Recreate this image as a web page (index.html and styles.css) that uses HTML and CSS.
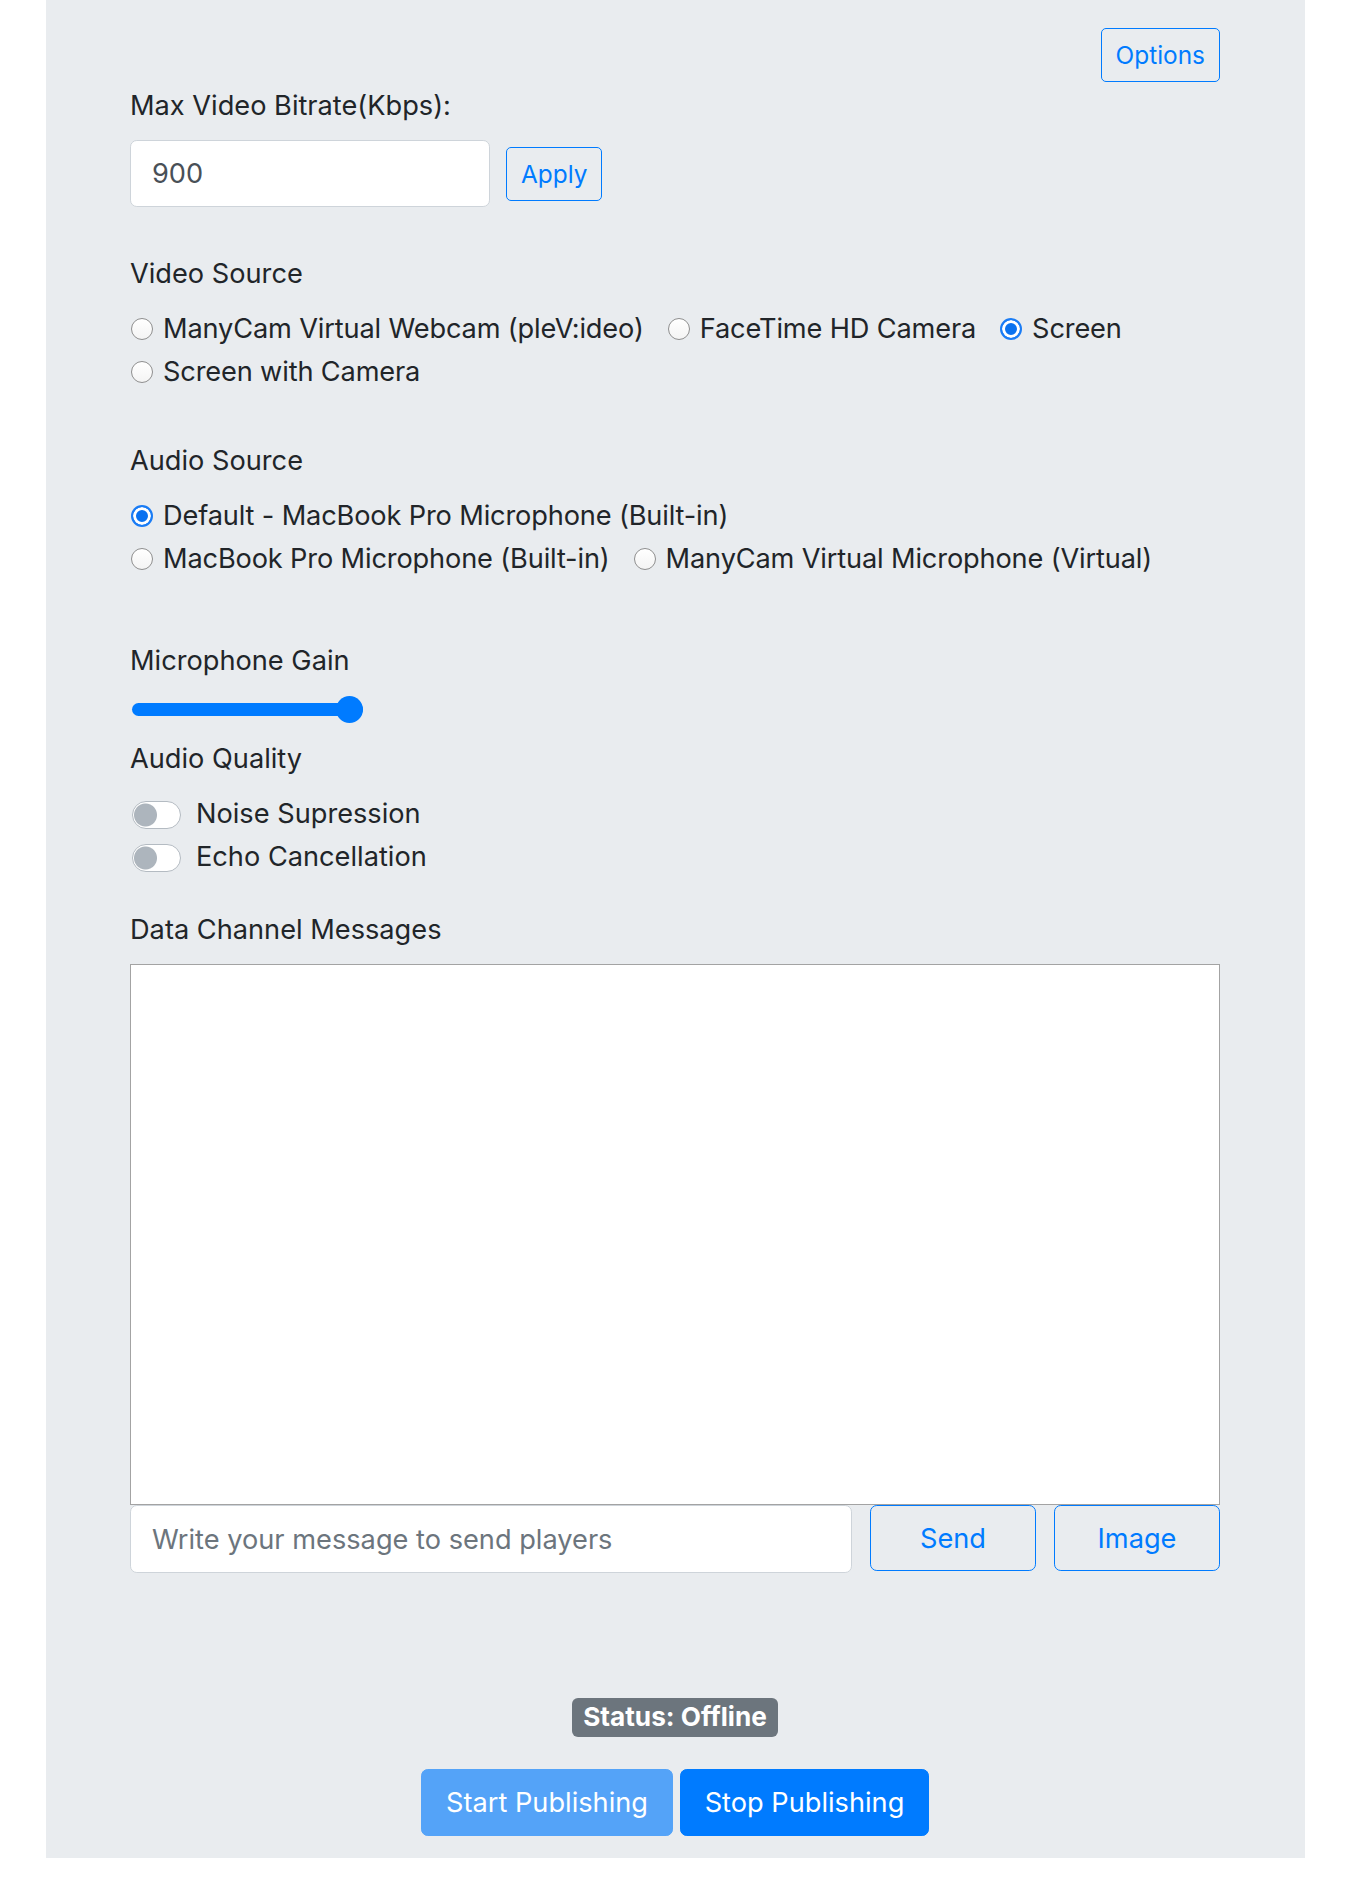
FILE: index.html
```html
<!DOCTYPE html>
<html lang="en">
<head>
<meta charset="utf-8">
<title>Publish</title>
<link rel="stylesheet" href="styles.css">
</head>
<body>
<div class="panel">
  <div class="top-row">
    <button class="btn btn-outline btn-sm">Options</button>
  </div>

  <label class="label label-first" for="bitrate">Max Video Bitrate(Kbps):</label>
  <div class="bitrate-row">
    <input id="bitrate" class="form-control bitrate" type="text" value="900">
    <button class="btn btn-outline btn-sm">Apply</button>
  </div>

  <div class="label section">Video Source</div>
  <div class="choices">
    <div class="choice-row">
      <label class="check"><input type="radio" name="video" class="radio">ManyCam Virtual Webcam (pleV:ideo)</label>
      <label class="check"><input type="radio" name="video" class="radio">FaceTime HD Camera</label>
      <label class="check"><input type="radio" name="video" class="radio" checked>Screen</label>
    </div>
    <div class="choice-row">
      <label class="check"><input type="radio" name="video" class="radio">Screen with Camera</label>
    </div>
  </div>

  <div class="label section">Audio Source</div>
  <div class="choices">
    <div class="choice-row">
      <label class="check"><input type="radio" name="audio" class="radio" checked>Default - MacBook Pro Microphone (Built-in)</label>
    </div>
    <div class="choice-row">
      <label class="check"><input type="radio" name="audio" class="radio">MacBook Pro Microphone (Built-in)</label>
      <label class="check"><input type="radio" name="audio" class="radio">ManyCam Virtual Microphone (Virtual)</label>
    </div>
  </div>

  <div class="label section-gain">Microphone Gain</div>
  <div class="slider-row">
    <input type="range" class="gain" min="0" max="100" value="100">
  </div>

  <div class="label section-quality">Audio Quality</div>
  <div class="switches">
    <label class="switch-row"><input type="checkbox" class="switch">Noise Supression</label>
    <label class="switch-row"><input type="checkbox" class="switch">Echo Cancellation</label>
  </div>

  <div class="label section-data">Data Channel Messages</div>
  <textarea class="messages" readonly></textarea>
  <div class="message-row">
    <input class="form-control message" type="text" placeholder="Write your message to send players">
    <button class="btn btn-outline btn-msg">Send</button>
    <button class="btn btn-outline btn-msg">Image</button>
  </div>

  <div class="status-row">
    <span class="badge">Status: Offline</span>
  </div>
  <div class="publish-row">
    <button class="btn btn-primary btn-start" disabled>Start Publishing</button>
    <button class="btn btn-primary btn-stop">Stop Publishing</button>
  </div>
</div>
</body>
</html>
```

FILE: styles.css
```css
* {
  box-sizing: border-box;
}

html, body {
  margin: 0;
  padding: 0;
  background: #ffffff;
}

body {
  font-family: Inter, "Liberation Sans", Arial, sans-serif;
  font-size: 27.2px;
  line-height: 40.8px;
  color: #212529;
}

.panel {
  margin-left: 46px;
  width: 1259px;
  background: #e9ecef;
  padding: 28px 85px 22px 84px;
  display: flex;
  flex-direction: column;
}

.top-row {
  display: flex;
  justify-content: flex-end;
  height: 54px;
}

.label {
  display: block;
  height: 41px;
  line-height: 41px;
  font-size: 27.2px;
}

.label-first {
  margin-top: 3px;
  margin-bottom: 14px;
}

.btn {
  font-family: inherit;
  display: inline-flex;
  align-items: center;
  justify-content: center;
  border: 1.7px solid transparent;
  border-radius: 6.8px;
  background: transparent;
  cursor: pointer;
  white-space: nowrap;
}

.btn-outline {
  color: #007bff;
  border-color: #007bff;
}

.btn-sm {
  height: 54px;
  font-size: 24.4px;
  padding: 0 14px;
  border-radius: 5px;
}

.bitrate-row {
  display: flex;
  align-items: center;
  gap: 16px;
  height: 67px;
}

.form-control {
  font-family: inherit;
  font-size: 27.2px;
  color: #495057;
  background: #fff;
  border: 1.7px solid #ced4da;
  border-radius: 6.8px;
  padding: 0 21px;
  outline: none;
}

.form-control::placeholder {
  color: #6c757d;
}

.bitrate {
  width: 360px;
  height: 67px;
}

.section {
  margin-top: 46px;
}

.choices {
  margin-top: 14px;
  display: flex;
  flex-direction: column;
}

.choice-row {
  display: flex;
  height: 43px;
  align-items: center;
  gap: 23px;
}

.check {
  display: inline-flex;
  align-items: center;
  gap: 10px;
  white-space: nowrap;
  letter-spacing: -0.15px;
}

.radio {
  appearance: none;
  -webkit-appearance: none;
  margin: 0 0 0 1px;
  width: 22px;
  height: 22px;
  border-radius: 50%;
  border: 1px solid #8f8f8f;
  background: linear-gradient(#ffffff, #f4f4f4);
  flex: none;
}

.radio:checked {
  border: 2px solid #1a7cf5;
  background: #0a72f0;
  box-shadow: inset 0 0 0 3px #ffffff;
}

.section-gain {
  margin-top: 59px;
}

.slider-row {
  margin-top: 14px;
  height: 28px;
  display: flex;
  align-items: center;
}

.gain {
  appearance: none;
  -webkit-appearance: none;
  margin: 0 0 0 2px;
  width: 231px;
  height: 28px;
  background: transparent;
}

.gain::-webkit-slider-runnable-track {
  height: 13px;
  border-radius: 7px;
  background: #007bff;
}

.gain::-webkit-slider-thumb {
  -webkit-appearance: none;
  appearance: none;
  width: 27px;
  height: 27px;
  border-radius: 50%;
  background: #007bff;
  border: none;
  margin-top: -7px;
}

.section-quality {
  margin-top: 15px;
}

.switches {
  margin-top: 14px;
  display: flex;
  flex-direction: column;
}

.switch-row {
  display: flex;
  align-items: center;
  height: 43px;
  gap: 15px;
}

.switch {
  appearance: none;
  -webkit-appearance: none;
  margin: 0 0 0 2px;
  width: 49px;
  height: 28px;
  border-radius: 14px;
  border: 1.5px solid #b4bbc2;
  background: radial-gradient(circle at 12.5px 50%, #adb5bd 11px, rgba(173, 181, 189, 0) 12px), #ffffff;
  flex: none;
}

.section-data {
  margin-top: 30px;
}

.messages {
  display: block;
  margin: 14px 0 0 0;
  width: 1090px;
  height: 541px;
  border: 1px solid #a3a3a3;
  background: #ffffff;
  resize: none;
  outline: none;
  font-family: inherit;
}

.message-row {
  display: grid;
  grid-template-columns: 1fr 166px 166px;
  column-gap: 18px;
  align-items: start;
}

.message {
  height: 68px;
  width: 100%;
}

.btn-msg {
  height: 66px;
  font-size: 27.2px;
  padding: 0;
}

.status-row {
  margin-top: 125px;
  display: flex;
  justify-content: center;
}

.badge {
  display: inline-flex;
  align-items: center;
  justify-content: center;
  height: 39px;
  padding: 0 11px;
  background: #6c757d;
  color: #ffffff;
  font-weight: 700;
  font-size: 26.2px;
  border-radius: 6px;
}

.publish-row {
  margin-top: 32px;
  display: flex;
  justify-content: center;
  gap: 7px;
}

.btn-primary {
  height: 67px;
  font-size: 27.2px;
  padding: 0 22px;
  color: #ffffff;
  background: #007bff;
  border-color: #007bff;
}

.btn-start {
  width: 252px;
  background: #54a3f8;
  border-color: #54a3f8;
  cursor: default;
}

.btn-stop {
  width: 249px;
}
```
